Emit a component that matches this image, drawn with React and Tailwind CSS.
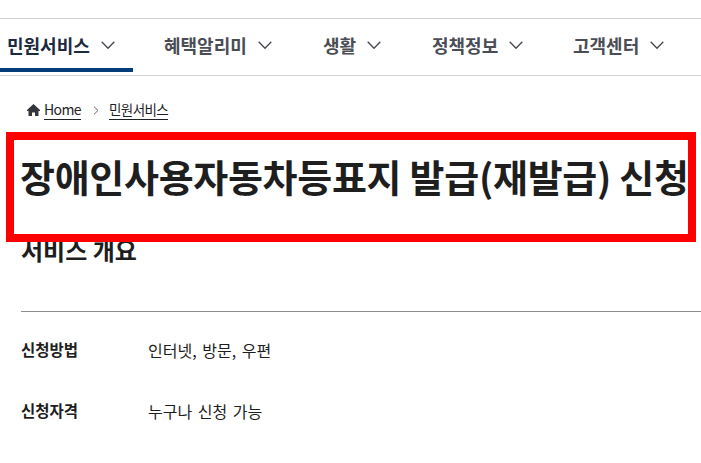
const menus = [
  { label: "민원서비스", width: "w-[133px]", pad: "pl-[7px]", active: true },
  { label: "혜택알리미", width: "w-[156px]", pad: "pl-[31px]" },
  { label: "생활", width: "w-[109px]", pad: "pl-[34px]" },
  { label: "정책정보", width: "w-[141px]", pad: "pl-[34px]" },
  { label: "고객센터", width: "w-[162px]", pad: "pl-[34px]" },
];

function Chevron() {
  return (
    <svg width="14" height="9" viewBox="0 0 14 9" fill="none" stroke="#44474f" strokeWidth="1.3" className="mt-[1px]">
      <path d="M0.7 0.8 L7 7.2 L13.3 0.8" />
    </svg>
  );
}

function NavItem({ label, width, pad, active }) {
  return (
    <div
      className={`${width} ${pad} h-[53px] shrink-0 flex items-center gap-[11px] pt-[2px] border-b-4 ${
        active ? "border-[#033c78] text-[#1c2a3f]" : "border-transparent text-[#4a4d55]"
      }`}
    >
      <span className="text-[18px] font-bold leading-none">{label}</span>
      <Chevron />
    </div>
  );
}

function InfoRow({ label, value }) {
  return (
    <div className="flex items-center h-[22px] text-[#1e1e1e]">
      <span className="w-[127px] shrink-0 font-bold text-[15.5px]">{label}</span>
      <span className="text-[16px] [word-spacing:2px]">{value}</span>
    </div>
  );
}

export default function App() {
  return (
    <div
      className="relative w-[701px] h-[463px] overflow-hidden bg-white"
      style={{ fontFamily: '"Noto Sans CJK KR", "Noto Sans", sans-serif' }}
    >
      {/* Nav */}
      <nav className="mt-[18px] flex h-[58px] border-y border-[#d2d2d6]">
        {menus.map((m) => (
          <NavItem key={m.label} {...m} />
        ))}
      </nav>

      {/* Breadcrumb */}
      <div className="mt-[23px] pl-[27px] flex items-center h-[22px] text-[14px] text-[#1e2124] tracking-[-0.6px]">
        <svg viewBox="0 0 13 12" className="w-[13px] h-[12px] mr-[4px] fill-[#33363d]">
          <path d="M6.5 0 0 6v1h1.5v5h3.5V8.5h3V12h3.5V7H13V6z" />
        </svg>
        <span className="border-b border-[#1e2124] leading-[19px]">Home</span>
        <svg width="6" height="9" viewBox="0 0 6 9" fill="none" stroke="#666" strokeWidth="1" className="ml-[12px] mr-[10px]">
          <path d="M1 0.7 L5 4.5 L1 8.3" />
        </svg>
        <span className="border-b border-[#1e2124] leading-[19px] text-[13.5px]">민원서비스</span>
      </div>

      {/* Title */}
      <h1 className="mt-[33px] pl-[20px] text-[38px] font-bold leading-[44px] text-[#1e1e1e] whitespace-nowrap tracking-[-0.3px]">
        장애인사용자동차등표지 발급(재발급) 신청
      </h1>

      <h2 className="mt-[36px] pl-[21px] text-[24px] font-bold leading-[32px] text-[#1e1e1e]">서비스 개요</h2>

      <div className="mt-[45px] ml-[21px] border-t border-[#8c8c8c]" />

      <div className="mt-[27px] pl-[21px] flex flex-col gap-[39px]">
        <InfoRow label="신청방법" value="인터넷, 방문, 우편" />
        <InfoRow label="신청자격" value="누구나 신청 가능" />
      </div>

      {/* Red highlight */}
      <div className="absolute left-[6px] top-[132px] w-[690px] h-[110px] border-[8px] border-[#ff0000]" />
    </div>
  );
}
